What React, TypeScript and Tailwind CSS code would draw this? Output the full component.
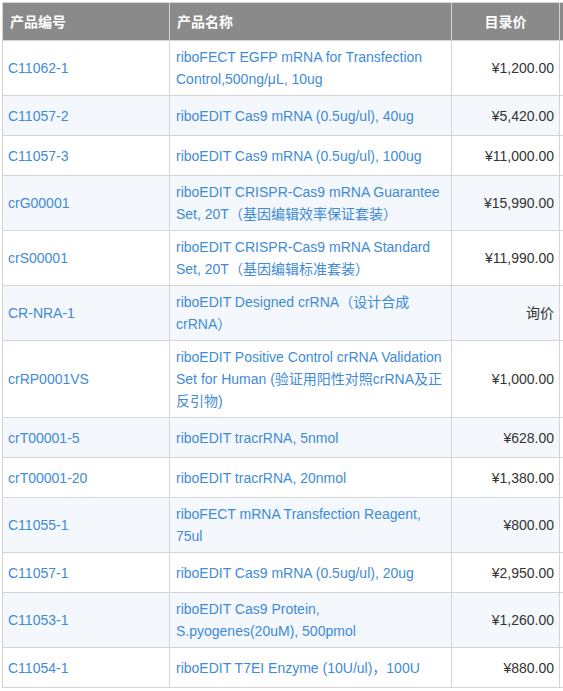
const rows: { code: string; name: string[]; price: string }[] = [
  { code: "C11062-1", name: ["riboFECT EGFP mRNA for Transfection", "Control,500ng/μL, 10ug"], price: "¥1,200.00" },
  { code: "C11057-2", name: ["riboEDIT Cas9 mRNA (0.5ug/ul), 40ug"], price: "¥5,420.00" },
  { code: "C11057-3", name: ["riboEDIT Cas9 mRNA (0.5ug/ul), 100ug"], price: "¥11,000.00" },
  { code: "crG00001", name: ["riboEDIT CRISPR-Cas9 mRNA Guarantee", "Set, 20T（基因编辑效率保证套装）"], price: "¥15,990.00" },
  { code: "crS00001", name: ["riboEDIT CRISPR-Cas9 mRNA Standard", "Set, 20T（基因编辑标准套装）"], price: "¥11,990.00" },
  { code: "CR-NRA-1", name: ["riboEDIT Designed crRNA（设计合成", "crRNA）"], price: "询价" },
  {
    code: "crRP0001VS",
    name: ["riboEDIT Positive Control crRNA Validation", "Set for Human (验证用阳性对照crRNA及正", "反引物)"],
    price: "¥1,000.00",
  },
  { code: "crT00001-5", name: ["riboEDIT tracrRNA, 5nmol"], price: "¥628.00" },
  { code: "crT00001-20", name: ["riboEDIT tracrRNA, 20nmol"], price: "¥1,380.00" },
  { code: "C11055-1", name: ["riboFECT mRNA Transfection Reagent,", "75ul"], price: "¥800.00" },
  { code: "C11057-1", name: ["riboEDIT Cas9 mRNA (0.5ug/ul), 20ug"], price: "¥2,950.00" },
  { code: "C11053-1", name: ["riboEDIT Cas9 Protein,", "S.pyogenes(20uM), 500pmol"], price: "¥1,260.00" },
  { code: "C11054-1", name: ["riboEDIT T7EI Enzyme (10U/ul)，100U"], price: "¥880.00" },
];

const App = () => {
  return (
    <div
      className="w-[563px] h-[691px] overflow-hidden bg-white pl-[2px] pt-[2px] text-[14px] leading-[22px]"
      style={{ fontFamily: '"Liberation Sans", Arial, "Noto Sans CJK SC", sans-serif' }}
    >
      <table className="table-fixed border-collapse w-[620px]">
        <colgroup>
          <col className="w-[167px]" />
          <col className="w-[282px]" />
          <col className="w-[108px]" />
          <col className="w-[63px]" />
        </colgroup>
        <thead>
          <tr className="h-[38px] bg-[#8a8a8a] text-white font-bold">
            <th className="border border-[#d4d4d4] px-[7px] text-left">产品编号</th>
            <th className="border border-[#d4d4d4] px-[7px] text-left">产品名称</th>
            <th className="border border-[#d4d4d4] px-[5px] text-center">目录价</th>
            <th className="border border-[#d4d4d4]"></th>
          </tr>
        </thead>
        <tbody>
          {rows.map((row, index) => (
            <tr key={index} className={index % 2 === 1 ? "h-[40px] bg-[#f4f7fb]" : "h-[40px] bg-white"}>
              <td className="border border-[#d4d4d4] px-[5px] py-[5px] text-[#3f8bd6]">{row.code}</td>
              <td className="border border-[#d4d4d4] px-[6px] py-[5px] text-[#3f8bd6] whitespace-nowrap">
                {row.name.map((line, i) => (
                  <div key={i}>{line}</div>
                ))}
              </td>
              <td className="border border-[#d4d4d4] px-[5px] py-[5px] text-right text-[#333333]">{row.price}</td>
              <td className="border border-[#d4d4d4] bg-white"></td>
            </tr>
          ))}
        </tbody>
      </table>
    </div>
  );
};

export default App;
